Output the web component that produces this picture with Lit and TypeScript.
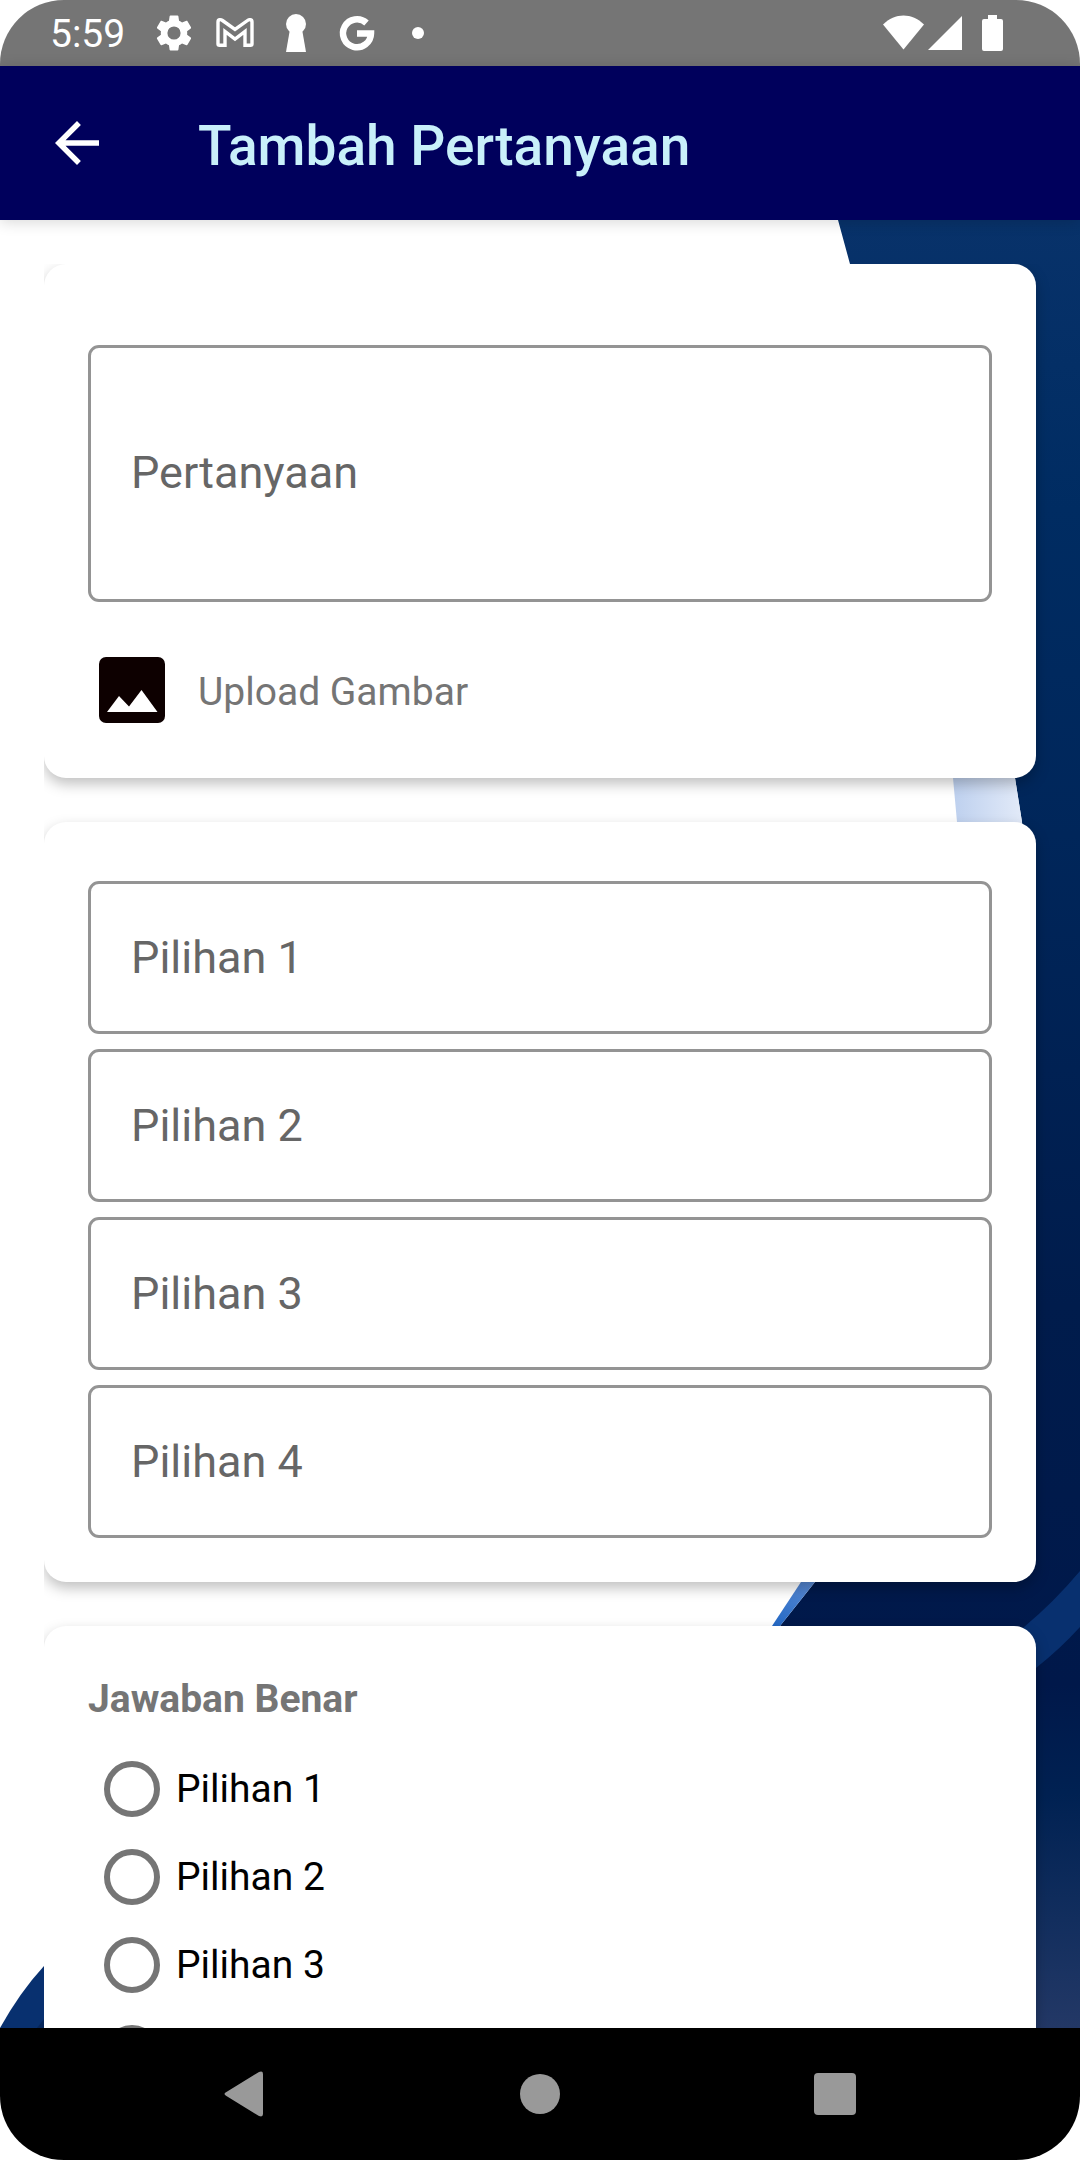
import { LitElement, html, css } from "lit";
import { customElement, property, state } from "lit/decorators.js";

@customElement("status-bar")
class StatusBar extends LitElement {
  static styles = css`
    :host {
      display: flex;
      align-items: center;
      justify-content: space-between;
      height: 66px;
      padding: 0 76px 0 50px;
      background: #757575;
      color: #fff;
      font: 400 39px/66px Roboto, sans-serif;
    }
    .group { display: flex; align-items: center; }
    .left { gap: 17px; }
    .time { padding: 2px 10px 0 0; line-height: 64px; }
    svg { display: block; fill: #fff; }
  `;
  render() {
    return html`
      <div class="group left">
        <span class="time">5:59</span>
        <svg width="44" height="44" viewBox="0 0 24 24" aria-hidden="true"><path d="M19.14 12.94c.04-.3.06-.61.06-.94 0-.32-.02-.64-.07-.94l2.03-1.58c.18-.14.23-.41.12-.61l-1.92-3.32c-.12-.22-.37-.29-.59-.22l-2.39.96c-.5-.38-1.03-.7-1.62-.94l-.36-2.54c-.04-.24-.24-.41-.48-.41h-3.84c-.24 0-.43.17-.47.41l-.36 2.54c-.59.24-1.13.57-1.62.94l-2.39-.96c-.22-.08-.47 0-.59.22L2.74 8.87c-.12.21-.08.47.12.61l2.03 1.58c-.05.3-.09.63-.09.94s.02.64.07.94l-2.03 1.58c-.18.14-.23.41-.12.61l1.92 3.32c.12.22.37.29.59.22l2.39-.96c.5.38 1.03.7 1.62.94l.36 2.54c.05.24.24.41.48.41h3.84c.24 0 .44-.17.47-.41l.36-2.54c.59-.24 1.13-.56 1.62-.94l2.39.96c.22.08.47 0 .59-.22l1.92-3.32c.12-.22.07-.47-.12-.61l-2.01-1.58zM12 15.6A3.6 3.6 0 1 1 12 8.400a3.600 3.600 0 0 1 0 7.200z"/></svg>
        <svg width="44" height="44" viewBox="0 0 44 44" aria-hidden="true"><path d="M5 11V33Q5 34.300 6.500 34.300H12V20.500L22 28 32 20.500V34.300H37.500Q39 34.300 39 33V11C39 8.500 36.500 8 34.500 9.500L22 18.500 9.500 9.500C7.500 8 5 8.500 5 11Z" fill="none" stroke="#fff" stroke-width="3.400"/></svg>
        <svg width="44" height="44" viewBox="0 0 44 44" aria-hidden="true"><circle cx="22" cy="13" r="10"/><path d="M16 18H28L32 41H12Z"/></svg>
        <svg width="44" height="44" viewBox="0 0 44 44" aria-hidden="true"><path d="M31.500 12A14 14 0 1 0 36 22.500H22" fill="none" stroke="#fff" stroke-width="6.500"/></svg>
        <svg width="44" height="44" viewBox="0 0 44 44" aria-hidden="true"><circle cx="22" cy="22" r="6"/></svg>
      </div>
      <svg width="122" height="44" viewBox="0 0 122 44" aria-hidden="true">
        <path d="M1 13.500C13 1.500 30 1.500 42 13.500L21.500 38.500Z"/>
        <path d="M80 5V39H46Z"/>
        <path d="M106 4h9v4h4q2 0 2 2v28q0 2-2 2h-17q-2 0-2-2V10q0-2 2-2h4z"/>
      </svg>
    `;
  }
}

@customElement("page-backdrop")
class PageBackdrop extends LitElement {
  static styles = css`
    :host { display: block; }
    svg { display: block; width: 100%; height: 100%; }
  `;
  render() {
    return html`
      <svg viewBox="0 220 1080 1808" preserveAspectRatio="none" aria-hidden="true">
        <defs>
          <linearGradient id="night" gradientUnits="userSpaceOnUse" x1="0" y1="220" x2="0" y2="2028">
            <stop offset="0" stop-color="#08326a"/>
            <stop offset="0.16" stop-color="#002c62"/>
            <stop offset="0.34" stop-color="#00265a"/>
            <stop offset="0.6" stop-color="#001c4c"/>
            <stop offset="0.81" stop-color="#00184a"/>
            <stop offset="0.87" stop-color="#002152"/>
            <stop offset="0.94" stop-color="#122e5e"/>
            <stop offset="1" stop-color="#233866"/>
          </linearGradient>
          <linearGradient id="ice" gradientUnits="userSpaceOnUse" x1="950" y1="0" x2="1022" y2="0">
            <stop offset="0" stop-color="#bccfee"/>
            <stop offset="1" stop-color="#e2eaf8"/>
          </linearGradient>
          <linearGradient id="azure" gradientUnits="userSpaceOnUse" x1="775" y1="1626" x2="810" y2="1582">
            <stop offset="0" stop-color="#2368c4"/>
            <stop offset="1" stop-color="#5a8ad4"/>
          </linearGradient>
        </defs>
        <path d="M838 220L850 264Q1000 560 1015 778L1022 822Q1040 1300 815 1582L780 1626 700 2028H1080V220Z" fill="url(#night)"/>
        <path d="M930 600L953 778 957 822 965 900H1030L1022 822 1015 778 990 600Z" fill="url(#ice)"/>
        <path d="M801 1582L772 1626 765 1640 768 1640 780 1626 815 1582 830 1560Z" fill="url(#azure)"/>
        <path d="M1080 1571Q1054 1602 1024 1627L1000 1650V1695L1036 1668Q1060 1649 1080 1627Z" fill="#08306f"/>
        <path d="M0 2028Q20 1992 44 1966H80V2028Z" fill="#08306f"/>
        <path d="M37 2028L44 2019H80V2028Z" fill="#06265a"/>
      </svg>
    `;
  }
}

@customElement("app-root")
class AppRoot extends LitElement {
  @property({ type: Array }) choices = ["Pilihan 1", "Pilihan 2", "Pilihan 3", "Pilihan 4"];
  @state() private answer = "";

  static styles = css`
    :host {
      display: flex;
      flex-direction: column;
      height: 100vh;
      border-radius: 64px;
      overflow: hidden;
      background: #fff;
      font-family: Roboto, sans-serif;
    }
    button { border: 0; padding: 0; margin: 0; background: none; font: inherit; color: inherit; }
    svg { display: block; }
    status-bar, .bar, .nav { flex: none; }
    .bar {
      position: relative;
      z-index: 1;
      display: flex;
      align-items: center;
      gap: 88px;
      height: 154px;
      padding: 0 44px;
      box-shadow: 0 2px 14px rgba(0, 0, 0, 0.16);
      background: #00005c;
    }
    .title { margin: 0; padding-top: 6px; font-size: 55px; line-height: 66px; font-weight: 500; color: #c9f0fa; }
    .page { position: relative; flex: 1; min-height: 0; display: flex; flex-direction: column; padding: 44px 0 0 44px; }
    .backdrop { position: absolute; inset: 0; }
    .form {
      position: relative;
      flex: 1;
      min-height: 0;
      display: flex;
      flex-direction: column;
      gap: 44px;
      padding-right: 44px;
      overflow: hidden auto;
      scrollbar-width: none;
    }
    .card {
      flex: none;
      display: flex;
      flex-direction: column;
      gap: 15px;
      padding: 59px 44px 44px;
      border-radius: 22px;
      background: #fff;
      box-shadow: 0 6px 14px rgba(0, 0, 0, 0.25);
    }
    .question { gap: 55px; padding: 81px 44px 55px; }
    .answers { gap: 23px; padding: 50px 44px; }
    .field {
      box-sizing: border-box;
      width: 100%;
      height: 153px;
      margin: 0;
      padding: 0 40px;
      border: 3px solid #949494;
      border-radius: 11px;
      outline: 0;
      background: #fff;
      color: #000;
      font: 400 45px/52px Roboto, sans-serif;
    }
    .field::placeholder { color: #666; opacity: 1; }
    .tall { display: block; height: 257px; padding: 99px 40px; resize: none; }
    .upload { display: flex; align-items: center; gap: 33px; padding: 0 11px; color: #757575; font-size: 39px; line-height: 44px; }
    .upload span { padding-top: 3px; }
    .legend { margin: 0; color: #757575; font-size: 39px; line-height: 46px; font-weight: 700; }
    .option { display: flex; align-items: center; gap: 16px; height: 88px; padding-left: 16px; color: #000; font-size: 39px; line-height: 46px; }
    .option input { appearance: none; box-sizing: border-box; width: 56px; height: 56px; margin: 0; border: 6px solid #757575; border-radius: 50%; }
    .option input:checked { background: radial-gradient(#00005c 0 12px, #fff 13px); }
    .nav { display: flex; align-items: center; height: 132px; padding: 0 98px; background: #000; }
    .nav button { flex: 1; display: flex; justify-content: center; }
  `;

  render() {
    return html`
      <status-bar></status-bar>
      <header class="bar">
        <button aria-label="Kembali">
          <svg width="66" height="66" viewBox="0 0 24 24" fill="#fff"><path d="M20 11H7.830l5.590-5.590L12 4l-8 8 8 8 1.410-1.410L7.830 13H20v-2z"/></svg>
        </button>
        <h1 class="title">Tambah Pertanyaan</h1>
      </header>
      <main class="page">
        <page-backdrop class="backdrop"></page-backdrop>
        <form class="form">
          <section class="card question">
            <textarea class="field tall" placeholder="Pertanyaan" aria-label="Pertanyaan"></textarea>
            <button type="button" class="upload">
              <svg width="66" height="66" viewBox="0 0 66 66"><rect width="66" height="66" rx="7" fill="#0d0000"/><path d="M8 55L20 39 30 49.500 42.500 33 58.500 55Z" fill="#fff"/></svg>
              <span>Upload Gambar</span>
            </button>
          </section>
          <section class="card">
            ${this.choices.map((c) => html`<input class="field" type="text" placeholder=${c} aria-label=${c} />`)}
          </section>
          <section class="card answers">
            <h2 class="legend" id="legend">Jawaban Benar</h2>
            <div role="radiogroup" aria-labelledby="legend">
              ${this.choices.map(
                (c) => html`<label class="option">
                  <input type="radio" name="answer" .checked=${this.answer === c} @change=${() => (this.answer = c)} />
                  <span>${c}</span>
                </label>`
              )}
            </div>
          </section>
        </form>
      </main>
      <nav class="nav">
        <button aria-label="Kembali">
          <svg width="44" height="46" viewBox="0 0 44 46" fill="#999"><path d="M3 21.300L36 1Q40 -0.500 40 3V43Q40 46.500 36 45L3 24.700Q0 23 3 21.300Z"/></svg>
        </button>
        <button aria-label="Beranda">
          <svg width="44" height="44" viewBox="0 0 44 44" fill="#999"><circle cx="22" cy="22" r="20"/></svg>
        </button>
        <button aria-label="Aplikasi terbaru">
          <svg width="44" height="44" viewBox="0 0 44 44" fill="#999"><rect x="1" y="1" width="42" height="42" rx="4"/></svg>
        </button>
      </nav>
    `;
  }
}
